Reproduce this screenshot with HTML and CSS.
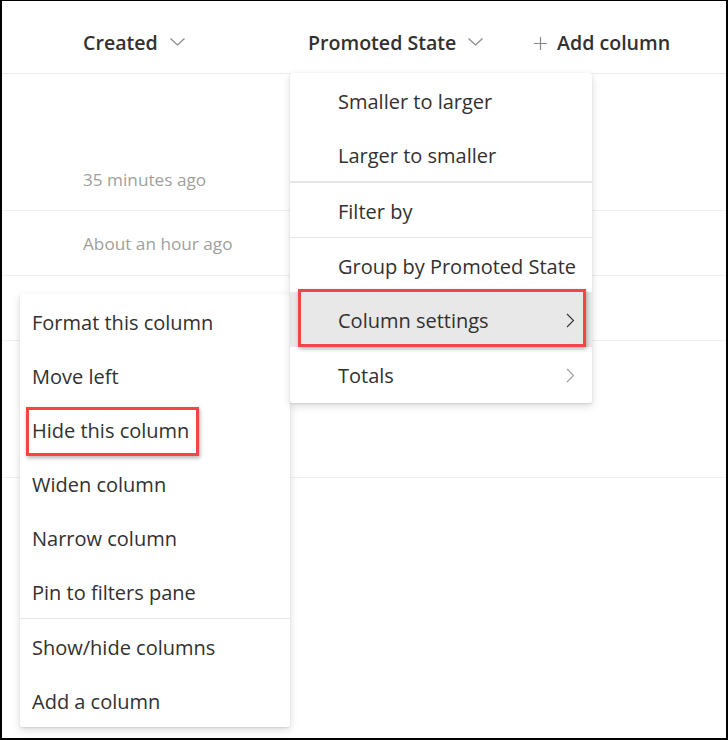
FILE: index.html
```html
<!DOCTYPE html>
<html lang="en">
<head>
    <meta charset="UTF-8">
    <title>Column menu</title>
    <link rel="stylesheet" href="styles.css">
</head>
<body>
    <div class="page">

        <!-- Column headers -->
        <div class="head">
            <div class="th">
                <span>Created</span>
                <svg class="chev-down" width="15" height="8" viewBox="0 0 15 8"><path d="M0.5 0.5 L7.5 7 L14.5 0.5" /></svg>
            </div>
            <div class="th">
                <span>Promoted State</span>
                <svg class="chev-down" width="15" height="8" viewBox="0 0 15 8"><path d="M0.5 0.5 L7.5 7 L14.5 0.5" /></svg>
            </div>
            <div class="th add">
                <svg class="plus" width="13" height="13" viewBox="0 0 13 13"><path d="M6.5 0 V13 M0 6.5 H13" /></svg>
                <span>Add column</span>
            </div>
        </div>

        <!-- Rows -->
        <div class="row tall"><div class="cell first">35 minutes ago</div></div>
        <div class="row"><div class="cell">About an hour ago</div></div>
        <div class="row"></div>
        <div class="row tall"></div>

        <!-- Column settings submenu -->
        <ul class="menu sub">
            <li>Format this column</li>
            <li>Move left</li>
            <li class="marked">Hide this column<span class="mark"></span></li>
            <li>Widen column</li>
            <li>Narrow column</li>
            <li>Pin to filters pane</li>
            <li class="divider"></li>
            <li>Show/hide columns</li>
            <li>Add a column</li>
        </ul>

        <!-- Header dropdown -->
        <ul class="menu main">
            <li>Smaller to larger</li>
            <li>Larger to smaller</li>
            <li class="divider wide"></li>
            <li>Filter by</li>
            <li class="divider"></li>
            <li>Group by Promoted State</li>
            <li class="active">Column settings
                <svg class="chev-right" width="9" height="15" viewBox="0 0 9 15"><path d="M1 1 L7.5 7.5 L1 14" /></svg>
                <span class="mark"></span>
            </li>
            <li>Totals
                <svg class="chev-right light" width="9" height="15" viewBox="0 0 9 15"><path d="M1 1 L7.5 7.5 L1 14" /></svg>
            </li>
        </ul>

    </div>
</body>
</html>
```

FILE: styles.css
```css
* { box-sizing: border-box; }
body { margin: 0; background: #fff; font-family: "Open Sans", sans-serif; color: #323130; }

.page { position: relative; width: 728px; height: 740px; border: 2px solid #000; border-top-width: 1px; overflow: hidden; background: #fff; }

.head { display: flex; height: 73px; padding: 28px 0 0 81px; border-bottom: 1px solid #edebe9; }
.th { width: 225px; display: flex; align-items: flex-start; font-size: 19.6px; font-weight: 600; line-height: 28px; }
.th.add { width: auto; }
.chev-down { margin: 9px 0 0 12px; fill: none; stroke: #8a8886; stroke-width: 1.2; }
.plus { margin: 8px 10px 0 1px; fill: none; stroke: #8a8886; stroke-width: 1.2; }

.row { height: 65px; border-bottom: 1px solid #f0efee; padding-left: 81px; }
.row.tall { height: 137px; }
.cell { font-size: 17.2px; line-height: 24px; color: #a19f9d; padding-top: 21px; }
.cell.first { padding-top: 94px; }

.menu { position: absolute; margin: 0; padding: 0; list-style: none; background: #fff; border-radius: 2px;
        box-shadow: 0 3px 8px rgba(0, 0, 0, 0.14), 0 1px 2px rgba(0, 0, 0, 0.1); }
.menu li { position: relative; display: flex; align-items: center; height: 54px; padding-top: 2px; font-size: 20px; white-space: nowrap; }
.menu li.divider { height: 1px; padding: 0; background: #e6e5e4; }
.menu li.divider.wide { height: 2px; }

.main { left: 288px; top: 72px; width: 302px; padding-bottom: 2px; z-index: 2; }
.main li { padding-left: 48px; }
.main li.active { height: 55px; background: #e8e8e8; }

.sub { left: 18px; top: 293px; width: 270px; z-index: 1; }
.sub li { padding-left: 12px; }

.chev-right { position: absolute; right: 17px; top: 21px; fill: none; stroke: #323130; stroke-width: 1.1; }
.chev-right.light { stroke: #a19f9d; }

.mark { position: absolute; border: 3px solid #f44447; box-shadow: 1px 2px 4px rgba(0, 0, 0, 0.3); }
.main .mark { left: 8px; right: 6px; top: -3px; bottom: 0; }
.sub .mark { left: 6px; top: 5px; width: 173px; height: 49px; }
```
